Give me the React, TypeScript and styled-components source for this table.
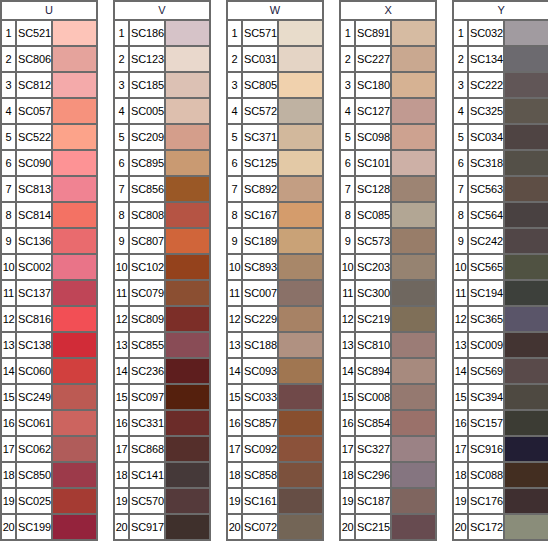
import React from "react";
import styled, { createGlobalStyle } from "styled-components";

const Global = createGlobalStyle`
  html, body { margin: 0; padding: 0; background: #fff; }
  body { font-family: "Liberation Sans", Arial, sans-serif; overflow: hidden; }
`;

type Row = [string, string];
type Group = { title: string; rows: Row[] };

const groups: Group[] = [
  {
    title: "U",
    rows: [
      ["SC521", "#fdc4b8"], ["SC806", "#e5a39c"], ["SC812", "#f4aaaa"], ["SC057", "#f6927d"],
      ["SC522", "#fca38a"], ["SC090", "#fd9395"], ["SC813", "#f08392"], ["SC814", "#f37264"],
      ["SC136", "#e96b6e"], ["SC002", "#e97488"], ["SC137", "#bf4557"], ["SC816", "#f24f55"],
      ["SC138", "#d12c38"], ["SC060", "#d1403e"], ["SC249", "#bc5a53"], ["SC061", "#cc645f"],
      ["SC062", "#b05c5a"], ["SC850", "#9c3a4a"], ["SC025", "#a53b33"], ["SC199", "#94233c"],
    ],
  },
  {
    title: "V",
    rows: [
      ["SC186", "#d6c3c8"], ["SC123", "#e9d8cc"], ["SC185", "#dcc1b4"], ["SC005", "#ddbfae"],
      ["SC209", "#d49e8b"], ["SC895", "#c99a72"], ["SC856", "#9a5826"], ["SC808", "#b55444"],
      ["SC807", "#d0653a"], ["SC102", "#94421c"], ["SC079", "#8b4f32"], ["SC809", "#7c2e28"],
      ["SC855", "#894c56"], ["SC236", "#5e1e1e"], ["SC097", "#55200d"], ["SC331", "#6b2c29"],
      ["SC868", "#552f2b"], ["SC141", "#453939"], ["SC570", "#553a3b"], ["SC917", "#3f302c"],
    ],
  },
  {
    title: "W",
    rows: [
      ["SC571", "#e8dccb"], ["SC031", "#e4d4c5"], ["SC805", "#f0d1ad"], ["SC572", "#bfb2a2"],
      ["SC371", "#d2b89c"], ["SC125", "#e3c9a6"], ["SC892", "#c39e83"], ["SC167", "#d49c6c"],
      ["SC189", "#c9a277"], ["SC893", "#a88769"], ["SC007", "#8a7168"], ["SC229", "#a78265"],
      ["SC188", "#b09181"], ["SC093", "#a07651"], ["SC033", "#704949"], ["SC857", "#884f2f"],
      ["SC092", "#8b523a"], ["SC858", "#7c513d"], ["SC161", "#664e45"], ["SC072", "#736556"],
    ],
  },
  {
    title: "X",
    rows: [
      ["SC891", "#d6bba2"], ["SC227", "#c9a890"], ["SC180", "#d6b293"], ["SC127", "#c19a91"],
      ["SC098", "#cda290"], ["SC101", "#cdb0a6"], ["SC128", "#9d8473"], ["SC085", "#b2a694"],
      ["SC573", "#987d69"], ["SC203", "#968371"], ["SC300", "#6f675f"], ["SC219", "#7f6f58"],
      ["SC810", "#9b7c76"], ["SC894", "#a78a7e"], ["SC008", "#957970"], ["SC854", "#9a716a"],
      ["SC327", "#9b8285"], ["SC296", "#857580"], ["SC187", "#7f655f"], ["SC215", "#674b50"],
    ],
  },
  {
    title: "Y",
    rows: [
      ["SC032", "#a19ba0"], ["SC134", "#6c6a6f"], ["SC222", "#615657"], ["SC325", "#5e574e"],
      ["SC034", "#4f4443"], ["SC318", "#545048"], ["SC563", "#5e4e45"], ["SC564", "#494141"],
      ["SC242", "#514647"], ["SC565", "#505242"], ["SC194", "#3d403b"], ["SC365", "#5a5569"],
      ["SC009", "#433432"], ["SC569", "#594a4a"], ["SC394", "#4e4941"], ["SC157", "#3c3c34"],
      ["SC916", "#221e34"], ["SC088", "#432e21"], ["SC176", "#3f2f30"], ["SC172", "#8a8d7a"],
    ],
  },
];

const Page = styled.div`
  display: flex;
  gap: 15px;
  align-items: flex-start;
  width: 600px;
`;

const Table = styled.table`
  flex: 0 0 auto;
  width: 98px;
  border: 1px solid #6b6b6b;
  border-collapse: separate;
  border-spacing: 0;
  table-layout: fixed;
  font-family: "Liberation Sans", Arial, sans-serif;
  font-size: 11px;
  color: #000;
`;

const HeadCell = styled.th`
  height: 17px;
  padding: 0;
  border: 1px solid #6b6b6b;
  font-weight: normal;
  text-align: center;
  line-height: 17px;
  color: #1a1a40;
`;

const NumCell = styled.td`
  width: 13px;
  height: 24px;
  padding: 0;
  border: 1px solid #6b6b6b;
  text-align: center;
  white-space: nowrap;
  letter-spacing: -0.3px;
`;

const CodeCell = styled.td`
  width: 33px;
  height: 24px;
  padding: 0 0 0 1px;
  border: 1px solid #6b6b6b;
  white-space: nowrap;
  letter-spacing: -0.15px;
`;

const Swatch = styled.td<{ $c: string }>`
  width: 43px;
  height: 24px;
  padding: 0;
  border: 1px solid #6b6b6b;
  background: ${(p) => p.$c};
`;

function ColorTable({ group }: { group: Group }) {
  return (
    <Table>
      <colgroup>
        <col style={{ width: 15 }} />
        <col style={{ width: 36 }} />
        <col style={{ width: 45 }} />
      </colgroup>
      <thead>
        <tr>
          <HeadCell colSpan={3}>{group.title}</HeadCell>
        </tr>
      </thead>
      <tbody>
        {group.rows.map(([code, color], i) => (
          <tr key={code}>
            <NumCell>{i + 1}</NumCell>
            <CodeCell>{code}</CodeCell>
            <Swatch $c={color} />
          </tr>
        ))}
      </tbody>
    </Table>
  );
}

export default function App() {
  return (
    <>
      <Global />
      <Page>
        {groups.map((g) => (
          <ColorTable key={g.title} group={g} />
        ))}
      </Page>
    </>
  );
}
